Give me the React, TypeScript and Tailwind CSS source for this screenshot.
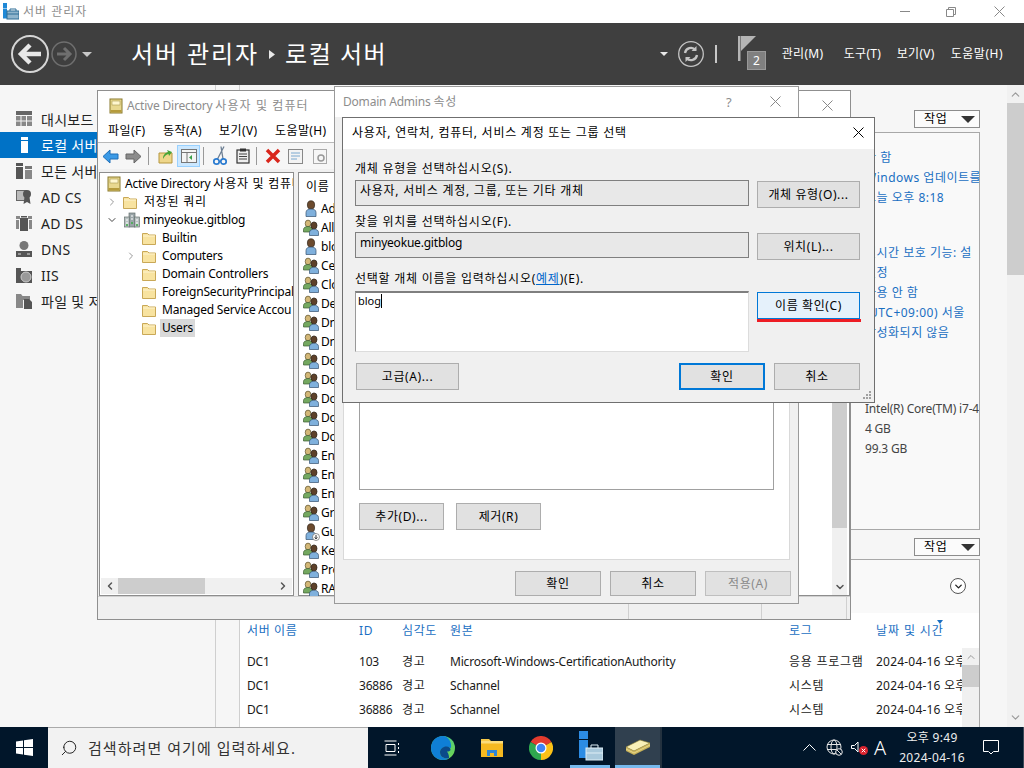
import React from "react";
import { ChevronRight, ChevronDown, ChevronLeft, ChevronUp, Search } from "lucide-react";

const K = "tracking-[0.75px]";

const Folder = ({ className = "" }: { className?: string }) => (
  <svg width="16" height="15" viewBox="0 0 16 15" className={`shrink-0 ${className}`}>
    <path d="M1.5 2.5h5l1.500 1.500h6.500v9.500h-13z" fill="#f8e3a0" stroke="#c9a857" />
    <path d="M2 5h12" stroke="#fdf3cf" />
  </svg>
);
const Book = () => (
  <svg width="16" height="16" viewBox="0 0 16 16" className="shrink-0">
    <rect x="2" y="1" width="12" height="14" fill="#e8d88f" stroke="#8a7a2e" />
    <rect x="4" y="3" width="8" height="4" fill="#fff7cf" stroke="#a89a50" strokeWidth=".6" />
    <rect x="2.5" y="12" width="11" height="2.5" fill="#b59b3c" />
  </svg>
);
const Domain = () => (
  <svg width="16" height="16" viewBox="0 0 16 16" className="shrink-0">
    <rect x="5" y="1" width="6" height="14" fill="#9aa5a8" stroke="#66716f" strokeWidth=".7" />
    <rect x="0.5" y="5" width="5" height="10" fill="#b9c2c2" stroke="#66716f" strokeWidth=".7" />
    <rect x="10.5" y="5" width="5" height="10" fill="#b9c2c2" stroke="#66716f" strokeWidth=".7" />
    <path d="M2 8h2M2 11h2M12 8h2M12 11h2M7 4h2M7 7h2" stroke="#fff" />
    <path d="M2 13h2M12 13h2M7 11h2" stroke="#3fae4a" strokeWidth="1.4" />
  </svg>
);
const User = ({ disabled }: { disabled?: boolean }) => (
  <svg width="17" height="18" viewBox="0 0 17 18" className="shrink-0">
    <ellipse cx="8" cy="5" rx="3.600" ry="4.200" fill="#6b4a2e" stroke="#2f2418" strokeWidth=".7" />
    <path d="M3 16.500v-4c0-2.500 2-3.500 5-3.500s5 1 5 3.500v4z" fill="#7fb0dc" stroke="#35506e" strokeWidth=".7" />
    {disabled && (
      <>
        <circle cx="13" cy="14" r="3.500" fill="#fff" stroke="#666" strokeWidth=".7" />
        <path d="M13 12v3.600M11.500 14.400l1.500 1.400 1.500-1.400" stroke="#333" fill="none" />
      </>
    )}
  </svg>
);
const Group = () => (
  <svg width="17" height="18" viewBox="0 0 17 18" className="shrink-0">
    <ellipse cx="5" cy="4.500" rx="2.800" ry="3.400" fill="#d3b777" stroke="#5d5330" strokeWidth=".7" />
    <path d="M.5 13v-2.500c0-2 2-3 4.500-3s4.500 1 4.500 3V13z" fill="#74a860" stroke="#3d5c32" strokeWidth=".7" />
    <ellipse cx="11" cy="6.500" rx="3" ry="3.600" fill="#5d4029" stroke="#2a2015" strokeWidth=".7" />
    <path d="M6.500 16.500v-3c0-2.300 2-3.200 4.500-3.200s4.500.9 4.500 3.200v3z" fill="#7fb0dc" stroke="#35506e" strokeWidth=".7" />
  </svg>
);

const Btn = ({ children, className = "" }: { children: React.ReactNode; className?: string }) => (
  <div className={`flex items-center justify-center h-[27px] bg-[#e1e1e1] border border-[#adadad] text-[12px] text-black tracking-[0.6px] ${className}`}>
    {children}
  </div>
);
const SmallBtn = ({ children, className = "" }: { children: React.ReactNode; className?: string }) => (
  <div className={`flex items-center justify-center w-[86px] h-[25px] bg-[#e1e1e1] border border-[#adadad] text-[12px] tracking-[0.6px] ${className}`}>
    {children}
  </div>
);

const navIcon = {
  dash: (
    <svg width="16" height="15" viewBox="0 0 16 15" fill="#666">
      <rect width="16" height="4" />
      <path d="M0 5h4.500v4.500H0zM5.500 5H10v4.500H5.500zM11 5h5v4.500h-5zM0 10.500h4.500V15H0zM5.500 10.500H10V15H5.500zM11 10.500h5V15h-5z" fill="#888" />
    </svg>
  ),
  local: (
    <svg width="16" height="16" viewBox="0 0 16 16" fill="#fff">
      <rect x="5" y="0" width="7" height="3" />
      <rect x="5" y="4" width="7" height="12" />
    </svg>
  ),
  all: (
    <svg width="16" height="16" viewBox="0 0 16 16" fill="#555">
      <rect x="0" y="0" width="7" height="3" />
      <rect x="0" y="4" width="7" height="12" />
      <rect x="9" y="3" width="7" height="3" fill="#777" />
      <rect x="9" y="7" width="7" height="9" fill="#888" />
    </svg>
  ),
  cs: (
    <svg width="16" height="16" viewBox="0 0 16 16">
      <rect x="0.500" y="1.500" width="10" height="10" fill="#bbb" stroke="#666" />
      <circle cx="11" cy="5" r="4" fill="#555" />
      <path d="M8.500 8l-1 7 3.500-2 3.500 2-1-7z" fill="#555" />
    </svg>
  ),
  ds: (
    <svg width="16" height="16" viewBox="0 0 16 16">
      <rect x="0" y="1" width="4" height="3" fill="#888" />
      <rect x="12" y="1" width="4" height="3" fill="#888" />
      <rect x="0" y="5" width="3" height="9" fill="#888" />
      <rect x="13" y="5" width="3" height="9" fill="#888" />
      <rect x="4" y="3" width="8" height="13" fill="#555" />
      <rect x="5" y="1" width="6" height="1.500" fill="#555" />
    </svg>
  ),
  dns: (
    <svg width="16" height="16" viewBox="0 0 16 16">
      <circle cx="8" cy="4.500" r="4.500" fill="#777" />
      <rect x="0" y="10" width="16" height="6" fill="#555" />
      <path d="M2 13h3M11 13h3" stroke="#ddd" />
    </svg>
  ),
  iis: (
    <svg width="16" height="16" viewBox="0 0 16 16">
      <rect x="0" y="1" width="5" height="3" fill="#555" />
      <rect x="0" y="4" width="16" height="12" fill="#555" />
      <circle cx="10" cy="10" r="5" fill="#999" stroke="#ccc" />
    </svg>
  ),
  file: (
    <svg width="16" height="16" viewBox="0 0 16 16">
      <path d="M0 1h5l1.500 2H14v4H7v8H0z" fill="#888" />
      <path d="M8 6h5l3 3v7H8z" fill="#555" />
    </svg>
  ),
};

const nav: [keyof typeof navIcon, string][] = [
  ["dash", "대시보드"],
  ["local", "로컬 서버"],
  ["all", "모든 서버"],
  ["cs", "AD CS"],
  ["ds", "AD DS"],
  ["dns", "DNS"],
  ["iis", "IIS"],
  ["file", "파일 및 저"],
];

const rows: [string, "u" | "g" | "d"][] = [
  ["Ad", "u"], ["All", "g"], ["blo", "u"], ["Ce", "g"], ["Clo", "g"], ["De", "g"], ["Dn", "g"],
  ["Dn", "g"], ["Do", "g"], ["Do", "g"], ["Do", "g"], ["Do", "g"], ["Do", "g"], ["En", "g"],
  ["En", "g"], ["En", "g"], ["Gr", "g"], ["Gu", "d"], ["Ke", "g"], ["Pro", "g"], ["RA", "g"],
];

const tree: [boolean, string][] = [
  [false, "Builtin"],
  [true, "Computers"],
  [false, "Domain Controllers"],
  [false, "ForeignSecurityPrincipal"],
  [false, "Managed Service Accou"],
  [false, "Users"],
];

const events = [
  ["DC1", "103", "경고", "Microsoft-Windows-CertificationAuthority", "응용 프로그램", "2024-04-16 오후"],
  ["DC1", "36886", "경고", "Schannel", "시스템", "2024-04-16 오후"],
  ["DC1", "36886", "경고", "Schannel", "시스템", "2024-04-16 오후"],
];

const Dropdown = () => (
  <div className="self-end flex items-center justify-between w-[66px] h-[18px] border border-[#8c8c8c] bg-[#fbfbfb] pl-[9px] pr-[4px] text-[12px] mr-[27px] tracking-[0.75px]">
    <span>작업</span>
    <svg width="14" height="7" viewBox="0 0 14 7"><path d="M0 0h14L7 7z" fill="#333" /></svg>
  </div>
);

export default function App() {
  return (
    <div className="relative w-[1024px] h-[768px] overflow-hidden flex flex-col bg-white text-black text-[12px] tracking-[-0.2px] font-['Noto_Sans','Noto_Sans_CJK_KR',sans-serif]">
      {/* title bar */}
      <div className="h-[23px] shrink-0 bg-white flex items-center">
        <svg width="16" height="17" viewBox="0 0 16 17" className="ml-[3px]">
          <rect x="0" y="0" width="4" height="5" fill="#1e88d6" />
          <rect x="0" y="5.500" width="4" height="10" fill="#1e88d6" />
          <rect x="4" y="8" width="12" height="8" fill="#8fb4cc" stroke="#2d6c96" />
          <path d="M7 8V6h6v2M4 11h12" stroke="#2d6c96" fill="none" />
        </svg>
        <span className="ml-[4px] text-[#8d8d8d] tracking-[1px]">서버 관리자</span>
        <div className="ml-auto flex items-center">
          <div className="w-[46px] flex justify-center"><div className="w-[10px] h-px bg-[#888]" /></div>
          <div className="w-[46px] flex justify-center">
            <svg width="10" height="10" viewBox="0 0 10 10" fill="none" stroke="#888"><path d="M.5 2.500h7v7h-7zM2.500 2.500v-2h7v7h-2" /></svg>
          </div>
          <div className="w-[50px] flex justify-center">
            <svg width="11" height="11" viewBox="0 0 11 11" stroke="#888"><path d="M.5.500l10 10M10.500.500l-10 10" /></svg>
          </div>
        </div>
      </div>

      {/* header */}
      <div className="h-[62px] shrink-0 bg-[#3f3f3f] flex items-center text-white">
        <svg width="100" height="40" viewBox="0 0 100 40" className="ml-[11px]">
          <circle cx="19" cy="20" r="18" fill="none" stroke="#d6d6d6" strokeWidth="2" />
          <path d="M30 20H11M19 11l-9 9 9 9" fill="none" stroke="#e8e8e8" strokeWidth="4.500" />
          <circle cx="53" cy="20" r="12" fill="none" stroke="#6f6f6f" strokeWidth="1.500" />
          <path d="M46 20h12M53 14l6 6-6 6" fill="none" stroke="#6f6f6f" strokeWidth="3" />
          <path d="M71 18h10l-5 5z" fill="#c8c8c8" />
        </svg>
        <span className="ml-[20px] text-[24px] leading-none tracking-[1.9px]">서버 관리자</span>
        <svg width="6" height="9" viewBox="0 0 6 9" className="ml-[10px]"><path d="M0 0l6 4.500-6 4.500z" fill="#e8e8e8" /></svg>
        <span className="ml-[10px] text-[24px] leading-none tracking-[1.5px]">로컬 서버</span>
        <div className="ml-auto flex items-center">
          <svg width="8" height="4" viewBox="0 0 8 4"><path d="M0 0h8L4 4z" fill="#e8e8e8" /></svg>
          <svg width="26" height="26" viewBox="0 0 26 26" className="ml-[10px]" fill="none" stroke="#c4c4c4">
            <circle cx="13" cy="13" r="12.300" strokeWidth="1.300" />
            <path d="M7 12a6 6 0 0 1 10.500-3M19 14a6 6 0 0 1-10.500 3" strokeWidth="2.300" />
            <path d="M18.500 5v5h-5zM7.500 21v-5h5z" fill="#c4c4c4" stroke="none" />
          </svg>
          <div className="ml-[11px] w-[2px] h-[18px] bg-[#c8c8c8]" />
          <div className="relative w-[30px] h-[36px] ml-[21px]">
            <svg width="18" height="26" viewBox="0 0 18 26" className="absolute left-0 top-0">
              <path d="M0 0h2.500v25H0z" fill="#b5b5b5" />
              <path d="M3 0h15L3 15z" fill="#b5b5b5" />
            </svg>
            <div className="absolute left-[9px] top-[15px] w-[19px] h-[19px] bg-[#808080] border border-[#999] flex items-center justify-center text-[12px] text-white">2</div>
          </div>
          <div className="flex text-[12px] ml-[14px] mr-[21px] tracking-[0.3px]">
            <span className="w-[62px]">관리(M)</span>
            <span className="w-[53px]">도구(T)</span>
            <span className="w-[54px]">보기(V)</span>
            <span className="tracking-[0.5px]">도움말(H)</span>
          </div>
        </div>
      </div>

      {/* body */}
      <div className="flex-1 min-h-0 flex">
        <div className="w-[216px] shrink-0 bg-[#f6f6f6] border-r border-[#cfcfcf] pt-[21px]">
          {nav.map(([k, label]) => (
            <div key={k} className={`h-[26px] flex items-center pl-[16px] gap-[9px] text-[14px] tracking-[0.3px] whitespace-nowrap ${k === "local" ? "bg-[#0072c6] text-white" : "text-[#222]"}`}>
              <span className="w-[16px] h-[16px] shrink-0 flex">{navIcon[k]}</span>
              {label}
            </div>
          ))}
        </div>
        <div className="w-[24px] shrink-0 bg-[#f6f6f6] border-r border-[#cfcfcf]" />
        <div className="flex-1 min-w-0 flex flex-col bg-[#f6f6f6]">
          <div className="h-[25px] shrink-0" />
          <Dropdown />
          <div className="h-[4px] shrink-0" />
          <div className="h-[398px] shrink-0 mr-[27px] border border-l-0 border-[#a8a8a8] bg-[#f9f9f9] pl-[625px] pt-[15px] text-[#1a6fc2] overflow-hidden whitespace-nowrap tracking-[0.5px]">
            {["안 함", "Windows 업데이트를", "오늘 오후 8:18"].map((t) => (
              <div key={t} className="h-[20px] leading-[20px] text-[12px]">{t}</div>
            ))}
            <div className="h-[35px]" />
            {["실시간 보호 기능: 설", "설정", "사용 안 함", "(UTC+09:00) 서울", "활성화되지 않음"].map((t) => (
              <div key={t} className="h-[20px] leading-[20px] text-[12px]">{t}</div>
            ))}
            <div className="h-[56px]" />
            {["Intel(R) Core(TM) i7-4", "4 GB", "99.3 GB"].map((t) => (
              <div key={t} className="h-[20px] leading-[20px] text-[12px] text-[#444] tracking-[-0.2px]">{t}</div>
            ))}
          </div>
          <div className="h-[8px] shrink-0" />
          <Dropdown />
          <div className="h-[3px] shrink-0" />
          <div className="flex-1 min-h-0 mr-[27px] border border-b-0 border-l-0 border-[#a8a8a8] bg-[#f9f9f9] flex flex-col">
            <div className="h-[53px] shrink-0 flex justify-end items-start pr-[13px] pt-[18px]">
              <div className="w-[16px] h-[16px] rounded-full border border-[#555] bg-white flex items-center justify-center">
                <ChevronDown size={11} strokeWidth={3} color="#222" />
              </div>
            </div>
            <div className="h-[35px] shrink-0 bg-white grid grid-cols-[112px_43px_48px_339px_87px_1fr] items-center pl-[7px] text-[#1a6fc2] whitespace-nowrap relative tracking-[0.6px]">
              <span>서버 이름</span><span>ID</span><span>심각도</span><span>원본</span><span>로그</span><span className="tracking-[0.9px]">날짜 및 시간</span>
              <svg width="6" height="4" viewBox="0 0 6 4" className="absolute left-[697px] top-[7px]"><path d="M0 0h6L3 4z" fill="#1a6fc2" /></svg>
            </div>
            <div className="flex-1 min-h-0 flex bg-white">
              <div className="flex-1 min-w-0 overflow-hidden pt-[2px]">
                {events.map((e, i) => (
                  <div key={i} className="h-[24px] grid grid-cols-[112px_43px_48px_339px_87px_200px] items-center pl-[7px] whitespace-nowrap text-[#1a1a1a]">
                    <span>{e[0]}</span><span>{e[1]}</span><span className={K}>{e[2]}</span><span>{e[3]}</span><span className={K}>{e[4]}</span><span className="tracking-[0.2px]">{e[5]}</span>
                  </div>
                ))}
              </div>
              <div className="w-[17px] shrink-0 bg-[#f0f0f0] flex flex-col items-center">
                <ChevronUp size={12} color="#999" className="mt-[3px]" />
                <div className="mt-[2px] w-full h-[22px] bg-[#cdcdcd]" />
              </div>
            </div>
          </div>
        </div>
        {/* outer scrollbar */}
        <div className="w-[17px] shrink-0 bg-[#f1f1f1] flex flex-col items-center">
          <ChevronUp size={13} color="#999" className="mt-[3px]" />
          <div className="mt-[2px] w-full h-[172px] bg-[#cdcdcd]" />
          <ChevronDown size={13} color="#999" className="mt-auto mb-[3px]" />
        </div>
      </div>

      {/* taskbar */}
      <div className="h-[41px] shrink-0 bg-[#01162a] flex items-stretch text-white">
        <div className="w-[48px] flex items-center justify-center">
          <svg width="17" height="17" viewBox="0 0 17 17" fill="#fff">
            <path d="M0 2.400l7-1v6.600H0zM8 1.200l9-1.200v8H8zM0 9h7v6.600l-7-1zM8 9h9v8l-9-1.200z" />
          </svg>
        </div>
        <div className="w-[320px] bg-[#f2f2f2] border-t border-[#aaa] flex items-center text-[#333] text-[15px]">
          <Search size={18} strokeWidth={1.300} color="#222" className="ml-[12px] -scale-x-100" />
          <span className="ml-[10px] whitespace-nowrap tracking-[1.05px]">검색하려면 여기에 입력하세요.</span>
        </div>
        <div className="w-[48px] flex items-center justify-center">
          <svg width="16" height="16" viewBox="0 0 16 16" fill="none" stroke="#fff"><path d="M.5 1h12M.5 15h12M2 4.500h9v7H2zM14.500 3v2M14.500 7v2M14.500 11v2" /></svg>
        </div>
        <div className="w-[49px] ml-[2px] flex items-center justify-center">
          <svg width="24" height="24" viewBox="0 0 24 24">
            <defs>
              <linearGradient id="edge" x1="0" y1="0" x2="1" y2="1"><stop offset="0" stopColor="#37c6a0" /><stop offset="1" stopColor="#74d64b" /></linearGradient>
            </defs>
            <circle cx="12" cy="12" r="12" fill="url(#edge)" />
            <path d="M12 0C5 0 0 5.500 0 12c0 7 5.500 12 12 12 3 0 5-1 6-2-5 1-9-1-9-6 0-3 3-5 7-5 2 0 3 1 4 1 1-6-3-12-8-12z" fill="#0f7fd6" />
            <path d="M9 16c0-3 3-5.500 6.500-5.500 2.500 0 4 1.500 4 3s-1.500 2-3.500 2c2 3 2 5 2 6.500-5 1-9-1-9-6z" fill="#0b4a8a" />
          </svg>
        </div>
        <div className="w-[49px] flex items-center justify-center">
          <svg width="22" height="20" viewBox="0 0 22 20">
            <path d="M0 1h8l2 2h12v16H0z" fill="#f7c948" />
            <rect x="0" y="3" width="22" height="16" fill="#f5b921" />
            <rect x="0" y="3" width="22" height="2.500" fill="#fbdc7a" />
            <path d="M6 18v-6h10v6h-3v-3h-4v3z" fill="#2f86d6" />
          </svg>
        </div>
        <div className="w-[49px] flex items-center justify-center">
          <svg width="24" height="24" viewBox="0 0 24 24">
            <path d="M12 12L22.400 6A12 12 0 0 0 1.600 6z" fill="#e33b2e" />
            <path d="M12 12l-10.400-6A12 12 0 0 0 12 24z" fill="#2fa84f" />
            <path d="M12 12l10.400-6A12 12 0 0 1 12 24z" fill="#fbc117" />
            <circle cx="12" cy="12" r="5.500" fill="#fff" />
            <circle cx="12" cy="12" r="4.300" fill="#3f85f4" />
          </svg>
        </div>
        <div className="w-[49px] flex flex-col items-center">
          <div className="flex-1 flex items-center">
            <svg width="26" height="31" viewBox="0 0 26 31">
              <rect x="2" y="0" width="9" height="8" fill="#2c8ce4" />
              <rect x="2" y="9" width="9" height="18" fill="#2c8ce4" />
              <rect x="9" y="17" width="17" height="12" fill="#a9c9dc" stroke="#dfeef6" />
              <path d="M14 17v-3h7v3M9 22h17" fill="none" stroke="#dfeef6" />
            </svg>
          </div>
          <div className="w-[40px] h-[3px] bg-[#76b9ed]" />
        </div>
        <div className="w-[45px] ml-px bg-[#30404f] flex items-center justify-center border-b-[3px] border-[#76b9ed] pt-[2px]">
          <svg width="26" height="20" viewBox="0 0 26 20">
            <path d="M1 10L15 3l10 3L9 14z" fill="#f8f0b8" stroke="#8a7a2e" strokeWidth=".6" />
            <path d="M1 10l8 4v4l-8-4zM9 14l16-8v4L9 18z" fill="#c9b35a" />
            <path d="M1 12l8 4 16-8" stroke="#f3e8a3" strokeWidth=".7" fill="none" />
          </svg>
        </div>
        <div className="w-[2px] bg-[#24323f]" />
        <div className="flex-1" />
        <div className="flex items-center">
          <svg width="13" height="7" viewBox="0 0 13 7" fill="none" stroke="#fff"><path d="M.5 6.500l6-6 6 6" /></svg>
          <svg width="17" height="17" viewBox="0 0 17 17" fill="none" stroke="#e6e6e6" className="ml-[10px]">
            <circle cx="8" cy="8" r="7" /><ellipse cx="8" cy="8" rx="3" ry="7" /><path d="M1 5.500h14M1 10.500h14" />
            <circle cx="13" cy="13" r="3.300" fill="#01162a" /><path d="M11 11l4 4" />
          </svg>
          <svg width="18" height="16" viewBox="0 0 18 16" className="ml-[8px]">
            <path d="M.5 5.500h3L7 2v10L3.500 8.500h-3z" fill="none" stroke="#fff" />
            <circle cx="12.500" cy="10.500" r="4.500" fill="#d9232e" />
            <path d="M10.700 8.700l3.600 3.600M14.300 8.700l-3.600 3.600" stroke="#fff" />
          </svg>
          <span className="ml-[3px] w-[16px] text-[20px] leading-none text-center font-light">A</span>
          <div className="ml-[7px] w-[74px] text-center text-[12px] leading-[20px] text-[#eee] tracking-[0.3px]">
            <div>오후 9:49</div>
            <div>2024-04-16</div>
          </div>
          <div className="ml-[14px] mr-[24px]">
            <svg width="16" height="15" viewBox="0 0 16 15" fill="none" stroke="#fff"><path d="M.5.500h15v11h-5L8 14l-2.500-2.500h-5z" /></svg>
          </div>
          <div className="w-px self-stretch bg-[#3b4a58]" />
        </div>
      </div>

      {/* AD Users and Computers window */}
      <div className="absolute left-[97px] top-[90px] w-[754px] h-[530px] bg-[#f0f0f0] border border-[#8f8f8f] flex flex-col">
        <div className="h-[28px] shrink-0 bg-white flex items-center pl-[10px] pt-[1px] relative whitespace-nowrap">
          <Book />
          <span className="ml-[3px] text-[#8d8d8d]">Active Directory <span className="tracking-[1.1px]">사용자 및 컴퓨터</span></span>
          <svg width="11" height="11" viewBox="0 0 11 11" stroke="#888" className="absolute left-[724px] top-[9px]"><path d="M.5.500l10 10M10.500.500l-10 10" /></svg>
        </div>
        <div className="h-[24px] shrink-0 bg-white flex items-center pl-[10px] pt-[1px] border-b border-[#b9b9b9] whitespace-nowrap tracking-[0.4px]">
          <span className="w-[55px]">파일(F)</span>
          <span className="w-[56px]">동작(A)</span>
          <span className="w-[56px]">보기(V)</span>
          <span>도움말(H)</span>
        </div>
        <div className="h-[26px] shrink-0 bg-[#f6f6f6] flex items-center pl-[4px]">
          <svg width="17" height="15" viewBox="0 0 17 15"><path d="M8 1L1 7.500 8 14v-4h8V5H8z" fill="#3b9ae6" stroke="#1e6fb8" /></svg>
          <svg width="17" height="15" viewBox="0 0 17 15" className="ml-[6px]"><path d="M9 1l7 6.500L9 14v-4H1V5h8z" fill="#8c8c8c" stroke="#666" /></svg>
          <div className="ml-[6px] w-px h-[18px] bg-[#999]" />
          <svg width="16" height="15" viewBox="0 0 16 15" className="ml-[9px]">
            <path d="M1 4h13v10H1z" fill="#eed68a" stroke="#b5963f" />
            <path d="M5 10c0-4 2-6 5-7l-1-2 5 2-3 4-.5-2c-2 .5-4 2-5.500 5z" fill="#45a436" />
          </svg>
          <div className="ml-[3px] w-[23px] h-[22px] bg-[#cce8ff] border border-[#99d1ff] flex items-center justify-center">
            <svg width="16" height="14" viewBox="0 0 16 14"><rect x=".5" y=".5" width="15" height="13" fill="#f5f5f5" stroke="#777" /><path d="M.5 3.500h15M6 3.500v10" stroke="#777" /><path d="M11 6v5L8 8.500z" fill="#3aa04a" /></svg>
          </div>
          <div className="ml-[3px] w-px h-[18px] bg-[#999]" />
          <svg width="14" height="20" viewBox="0 0 14 20" className="ml-[9px]" fill="none" stroke="#2a7bd0" strokeWidth="1.300">
            <path d="M11 .5L4.500 13M8 .5L10 13" stroke="#6d7f93" />
            <circle cx="3.500" cy="15.500" r="2.700" strokeWidth="1.700" />
            <circle cx="10.500" cy="15.500" r="2.700" strokeWidth="1.700" />
          </svg>
          <svg width="14" height="16" viewBox="0 0 14 16" className="ml-[9px]"><rect x="1" y="2" width="12" height="13" fill="#eee" stroke="#333" strokeWidth="1.200" /><rect x="4" y="0.500" width="6" height="3" fill="#333" /><path d="M3 6h8M3 8.500h8M3 11h8" stroke="#444" /></svg>
          <div className="ml-[6px] w-px h-[18px] bg-[#999]" />
          <svg width="16" height="16" viewBox="0 0 16 16" className="ml-[8px]"><path d="M2 2l12 12M14 2L2 14" stroke="#d9261c" strokeWidth="3.500" /></svg>
          <svg width="15" height="15" viewBox="0 0 15 15" className="ml-[7px]"><rect x=".5" y=".5" width="14" height="14" fill="#f3f3f3" stroke="#888" /><path d="M3 4h9M3 7h9M3 10h6" stroke="#7aa8cf" /></svg>
          <svg width="15" height="15" viewBox="0 0 15 15" className="ml-[10px]"><rect x=".5" y=".5" width="13" height="14" fill="#f6f6f6" stroke="#aaa" /><circle cx="8" cy="9" r="3" fill="none" stroke="#999" strokeWidth="1.500" /></svg>
        </div>
        <div className="flex-1 min-h-0 flex pt-[3px] pl-[1px] gap-[4px] bg-[#f0f0f0]">
          <div className="w-[195px] shrink-0 bg-white border border-[#8d8d8d] flex flex-col">
            <div className="flex-1 min-h-0 overflow-hidden pt-[1px] whitespace-nowrap">
              <div className="h-[19px] flex items-center pl-[6px] gap-[3px]"><Book /><span>Active Directory <span className={K}>사용자 및 컴퓨터</span></span></div>
              <div className="h-[18px] flex items-center pl-[6px]">
                <ChevronRight size={12} color="#999" className="shrink-0" />
                <Folder className="ml-[4px]" />
                <span className={`ml-[6px] ${K}`}>저장된 쿼리</span>
              </div>
              <div className="h-[18px] flex items-center pl-[6px]">
                <ChevronDown size={12} color="#444" className="shrink-0" />
                <span className="ml-[6px] flex"><Domain /></span>
                <span className="ml-[3px]">minyeokue.gitblog</span>
              </div>
              {tree.map(([exp, name]) => (
                <div key={name} className="h-[18px] flex items-center pl-[25px]">
                  {exp ? <ChevronRight size={12} color="#999" className="shrink-0" /> : <span className="w-[12px] shrink-0" />}
                  <Folder className="ml-[4px]" />
                  <span className={name === "Users" ? "ml-[3px] bg-[#d9d9d9] px-[2px]" : "ml-[5px]"}>{name}</span>
                </div>
              ))}
            </div>
            <div className="h-[16px] shrink-0 mb-[1px] mx-[1px] bg-[#f0f0f0] flex items-center px-[3px]">
              <ChevronLeft size={12} strokeWidth={3} color="#555" />
              <div className="ml-[2px] w-[87px] h-[16px] bg-[#cdcdcd]" />
              <ChevronRight size={12} strokeWidth={3} color="#555" className="ml-auto" />
            </div>
          </div>
          <div className="flex-1 min-w-0 bg-white border border-[#8d8d8d] flex">
            <div className="flex-1 min-w-0">
              <div className="h-[26px] pl-[7px] pt-[2px] flex items-center tracking-[0.6px]">이름</div>
              {rows.map(([t, k], i) => (
                <div key={i} className="h-[19.05px] flex items-center pl-[4px] gap-[1px]">
                  {k === "u" ? <User /> : k === "d" ? <User disabled /> : <Group />}
                  <span>{t}</span>
                </div>
              ))}
            </div>
            <div className="w-[15px] shrink-0 mr-[2px] bg-[#f0f0f0] flex flex-col items-center">
              <div className="mt-[230px] w-full h-[125px] bg-[#cdcdcd]" />
              <ChevronDown size={12} strokeWidth={3} color="#555" className="mt-auto mb-[2px]" />
            </div>
          </div>
        </div>
        <div className="h-[23px] shrink-0 bg-[#f0f0f0] border-t border-[#d0d0d0] flex">
          <div className="w-[531px] border-r border-[#d0d0d0]" />
          <div className="w-[133px] border-r border-[#d0d0d0]" />
          <div className="w-[85px] border-r border-[#d0d0d0]" />
        </div>
      </div>

      {/* Domain Admins properties */}
      <div className="absolute left-[334px] top-[86px] w-[465px] h-[518px] bg-[#f0f0f0] border border-[#9a9a9a] flex flex-col">
        <div className="h-[30px] shrink-0 bg-white flex items-center pl-[8px] relative text-[#8d8d8d]">
          <span>Domain Admins <span className={K}>속성</span></span>
          <span className="absolute left-[391px] top-[6px] text-[13px]">?</span>
          <svg width="11" height="11" viewBox="0 0 11 11" stroke="#888" className="absolute left-[435px] top-[9px]"><path d="M.5.500l10 10M10.500.500l-10 10" /></svg>
        </div>
        <div className="h-[443px] shrink-0 mx-[8px] bg-white border border-[#d9d9d9] flex flex-col px-[15px]">
          <div className="h-[372px] shrink-0 mt-[0px] border border-[#a0a0a0] border-t-0" />
          <div className="flex gap-[12px] mt-[13px]">
            <Btn className="w-[85px]">추가(D)...</Btn>
            <Btn className="w-[85px]">제거(R)</Btn>
          </div>
        </div>
        <div className="flex justify-end gap-[9px] pr-[7px] mt-[11px]">
          <SmallBtn>확인</SmallBtn>
          <SmallBtn>취소</SmallBtn>
          <SmallBtn className="bg-[#cccccc] border-[#bfbfbf] text-[#8a8a8a]">적용(A)</SmallBtn>
        </div>
      </div>

      {/* Select dialog */}
      <div className="absolute left-[342px] top-[117px] w-[533px] h-[286px] bg-[#f0f0f0] border border-[#6f6f6f] flex flex-col">
        <div className={`h-[31px] shrink-0 bg-white flex items-center pl-[9px] pb-[2px] relative ${K}`}>
          사용자, 연락처, 컴퓨터, 서비스 계정 또는 그룹 선택
          <svg width="11" height="11" viewBox="0 0 11 11" stroke="#000" className="absolute left-[510px] top-[9px]"><path d="M.5.500l10 10M10.500.500l-10 10" /></svg>
        </div>
        <div className="flex-1 min-h-0 pl-[12px] pr-[14px] pt-[10px] flex flex-col relative">
          <div className={`h-[20px] leading-[19px] ${K}`}>개체 유형을 선택하십시오(S).</div>
          <div className="flex justify-between mt-px">
            <div className={`w-[394px] h-[26px] bg-[#e8e8e8] border border-[#7f7f7f] pl-[4px] leading-[19px] ${K}`}>사용자, 서비스 계정, 그룹, 또는 기타 개체</div>
            <Btn className="w-[103px] mt-[1px]">개체 유형(O)...</Btn>
          </div>
          <div className={`h-[19px] leading-[19px] mt-[4px] ${K}`}>찾을 위치를 선택하십시오(F).</div>
          <div className="flex justify-between mt-[1px]">
            <div className="w-[394px] h-[26px] bg-[#e8e8e8] border border-[#7f7f7f] pl-[4px] leading-[19px]">minyeokue.gitblog</div>
            <Btn className="w-[103px] mt-[1px]">위치(L)...</Btn>
          </div>
          <div className={`h-[19px] leading-[19px] mt-[9px] ${K}`}>
            선택할 개체 이름을 입력하십시오(<span className="text-[#0066cc] underline">예제</span>)(E).
          </div>
          <div className="flex justify-between mt-[3px]">
            <div className="w-[394px] h-[61px] bg-white border border-[#dcdcdc] border-t-2 border-t-[#7f7f7f] border-l-[#999] pl-[2px] text-[11px] leading-[16px] flex items-start tracking-normal">
              <span>blog</span><span className="w-px h-[14px] bg-black mt-[1px]" />
            </div>
            <div className="w-[103px] mt-[1px]">
              <Btn className="w-full !bg-[#e5f1fb] !border-[#0078d7]">이름 확인(C)</Btn>
              <div className="h-[3px] w-[104px] bg-[#ed1c24]" />
            </div>
          </div>
          <div className="flex mt-[11px] justify-between">
            <Btn className="w-[103px] ml-px">고급(A)...</Btn>
            <div className="flex gap-[9px]">
              <Btn className="w-[86px] border-2 !border-[#0078d7]">확인</Btn>
              <Btn className="w-[86px]">취소</Btn>
            </div>
          </div>
          <svg width="10" height="10" viewBox="0 0 10 10" fill="#a0a0a0" className="absolute right-[2px] bottom-[2px]">
            <path d="M7 1h2v2H7zM4 4h2v2H4zM7 4h2v2H7zM1 7h2v2H1zM4 7h2v2H4zM7 7h2v2H7z" />
          </svg>
        </div>
      </div>
    </div>
  );
}
